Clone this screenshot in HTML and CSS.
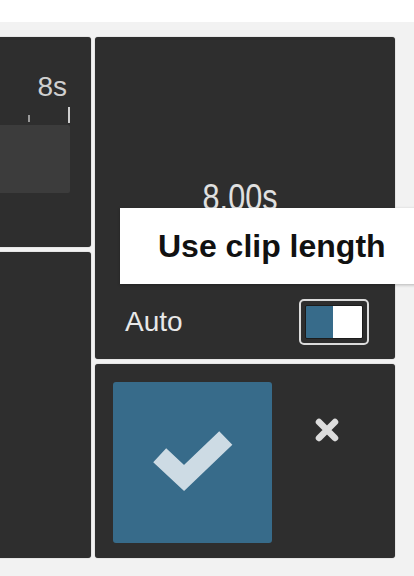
FILE: index.html
```html
<!DOCTYPE html>
<html lang="en">
<head>
    <meta charset="UTF-8">
    <meta name="viewport" content="width=device-width, initial-scale=1.0">
    <title>Clip Duration</title>
    <link rel="stylesheet" href="styles.css">
</head>
<body>
    <div class="top-strip"></div>
    <div class="editor">
        <div class="col col-left">
            <div class="panel timeline">
                <div class="ruler-label">8s</div>
                <div class="ticks">
                    <span class="tick tick-small"></span>
                    <span class="tick tick-big"></span>
                </div>
                <div class="clip-block"></div>
            </div>
            <div class="panel tracks"></div>
        </div>
        <div class="col col-right">
            <div class="panel duration">
                <div class="duration-value"><span>8.00s</span></div>
                <div class="spacer"></div>
                <div class="auto-row">
                    <span class="auto-label">Auto</span>
                    <div class="toggle">
                        <div class="toggle-inner">
                            <span class="toggle-on"></span>
                            <span class="toggle-knob"></span>
                        </div>
                    </div>
                </div>
            </div>
            <div class="panel actions">
                <button class="btn-ok" title="Apply">
                    <svg width="159" height="161" viewBox="0 0 159 161">
                        <polyline points="46.7,73.3 71,96 112.8,56" fill="none" stroke="#cddbe4" stroke-width="19" stroke-linejoin="miter" stroke-linecap="butt"/>
                    </svg>
                </button>
                <button class="btn-cancel" title="Cancel">
                    <svg width="44" height="44" viewBox="0 0 44 44">
                        <path d="M14 14 L30 30 M30 14 L14 30" stroke="#dddddd" stroke-width="6.5" stroke-linecap="round"/>
                    </svg>
                </button>
            </div>
        </div>
        <!-- tooltip over the auto toggle -->
        <div class="tooltip">Use clip length</div>
    </div>
</body>
</html>
```

FILE: styles.css
```css
*,
html{
    box-sizing: border-box;
    padding: 0;
    margin: 0;
}
html, body{
    width: 414px;
    height: 576px;
    overflow: hidden;
}
body{
    background-color: #f2f2f2;
    font-family: "Liberation Sans", Arial, sans-serif;
    color: #e6e6e6;
}
.top-strip{
    height: 22px;
    background: #fff;
}
.editor{
    position: relative;
    display: flex;
    gap: 4px;
    margin-left: -109px;
    padding-top: 15px;
}
.col{
    display: flex;
    flex-direction: column;
    gap: 5px;
}
.col-left{
    width: 200px;
}
.col-right{
    width: 300px;
}
.panel{
    background-color: #2e2e2e;
    border-radius: 3px;
    box-shadow: 0 0 1px rgba(0,0,0,0.5);
}

/* timeline */
.timeline{
    height: 210px;
    padding: 34px 21px 0 0;
    display: flex;
    flex-direction: column;
    align-items: flex-end;
}
.ruler-label{
    font-size: 28px;
    line-height: 32px;
    color: #d0d0d0;
    margin-right: 3px;
}
.ticks{
    height: 16px;
    margin-top: 4px;
    display: flex;
    align-items: flex-end;
    gap: 38px;
}
.tick{
    display: block;
    width: 2px;
    background: #cfcfcf;
}
.tick-small{
    height: 7px;
    margin-bottom: 1px;
    background: #9a9a9a;
}
.tick-big{
    height: 16px;
}
.clip-block{
    margin-top: 2px;
    width: 100%;
    height: 68px;
    background: #3c3c3c;
    border-radius: 2px;
}
.tracks{
    height: 306px;
}

/* duration */
.duration{
    height: 322px;
    padding: 141px 26px 14px 30px;
    display: flex;
    flex-direction: column;
}
.duration-value{
    font-size: 36px;
    line-height: 40px;
    text-align: center;
    padding-right: 14px;
    color: #e0e0e0;
}
.duration-value span{
    display: inline-block;
    transform: scaleX(0.85);
}
.spacer{
    flex-grow: 1;
}
.auto-row{
    display: flex;
    align-items: center;
    justify-content: space-between;
}
.auto-label{
    font-size: 28px;
    color: #e8e8e8;
}
.toggle{
    width: 70px;
    height: 46px;
    border: 2px solid #dcdcdc;
    border-radius: 5px;
    padding: 4px;
}
.toggle-inner{
    display: flex;
    height: 100%;
    border: 1px solid #1c1c1c;
    border-radius: 2px;
    overflow: hidden;
}
.toggle-on{
    width: 27px;
    background: #376b8a;
}
.toggle-knob{
    flex-grow: 1;
    background: #fff;
}

/* actions */
.actions{
    height: 194px;
    padding: 18px 0 0 18px;
    display: flex;
    align-items: flex-start;
}
.btn-ok{
    width: 159px;
    height: 161px;
    background: #376b8a;
    border: none;
    border-radius: 3px;
    cursor: pointer;
    display: block;
}
.btn-ok svg,
.btn-cancel svg{
    display: block;
}
.btn-cancel{
    width: 44px;
    height: 44px;
    margin: 26px 0 0 33px;
    background: none;
    border: none;
    cursor: pointer;
}

.tooltip{
    position: absolute;
    left: 229px;
    top: 186px;
    width: 320px;
    height: 76px;
    padding-left: 38px;
    background: #fff;
    color: #111;
    font-size: 32px;
    font-weight: bold;
    line-height: 76px;
    white-space: nowrap;
    box-shadow: 0 1px 3px rgba(0,0,0,0.25);
}
```
